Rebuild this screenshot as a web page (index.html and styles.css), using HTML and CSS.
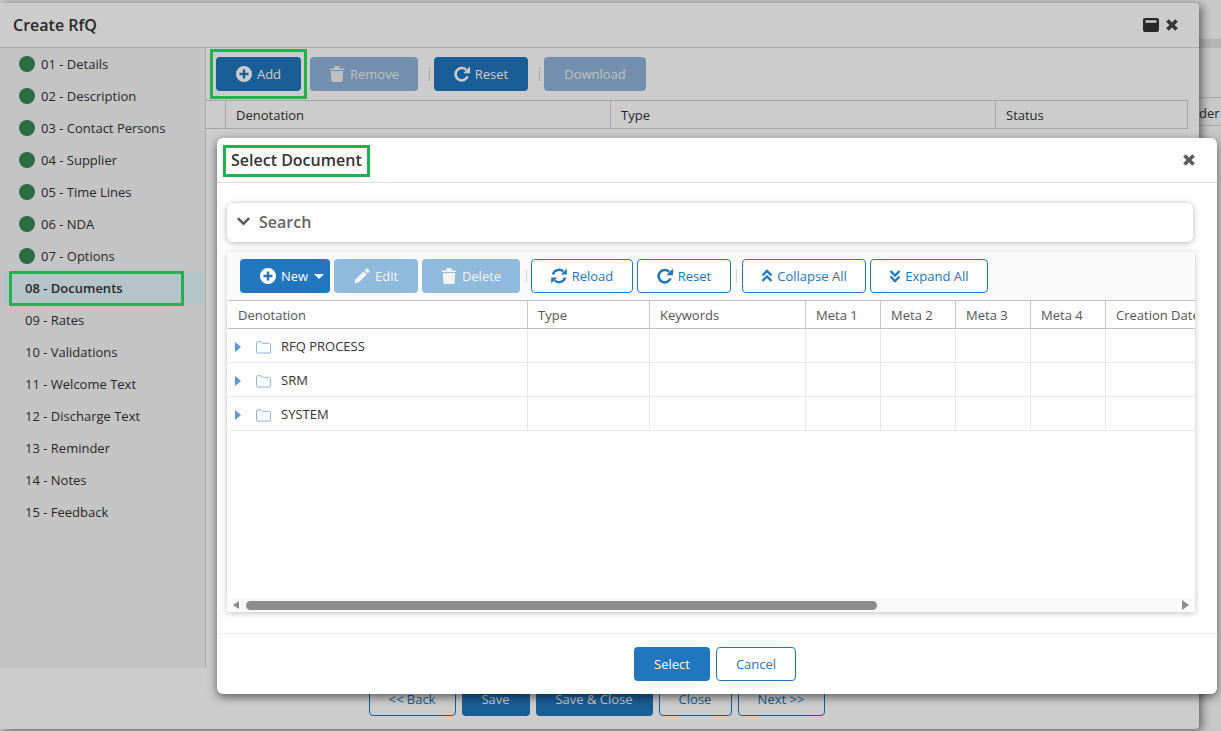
FILE: index.html
```html
<!DOCTYPE html>
<html lang="en">
<head>
  <meta charset="UTF-8">
  <meta name="viewport" content="width=device-width, initial-scale=1.0">
  <title>Create RfQ</title>
  <link rel="stylesheet" href="styles.css">
</head>
<body>
  <svg class="sprite" xmlns="http://www.w3.org/2000/svg">
    <symbol id="i-plus" viewBox="0 0 16 16"><path fill-rule="evenodd" d="M8 0a8 8 0 1 0 0 16A8 8 0 0 0 8 0zM6.8 3.5h2.4v3.3h3.3v2.4H9.2v3.3H6.8V9.2H3.5V6.8h3.3z"/></symbol>
    <symbol id="i-trash" viewBox="0 0 16 16"><path d="M5.300 2.400V1.300C5.300.6 5.900 0 6.600 0h2.800c.7 0 1.300.6 1.300 1.300v1.100H14.500c.4 0 .7.3.7.7v1H.8v-1c0-.4.3-.7.7-.7zM1.800 5h12.400l-.6 9.600c0 .8-.6 1.400-1.300 1.400H3.700c-.7 0-1.300-.6-1.300-1.400z"/></symbol>
    <symbol id="i-repeat" viewBox="0 0 16 16"><path fill="none" stroke="currentColor" stroke-width="2.600" d="M13.600 10.400A6.200 6.200 0 1 1 12.200 3.800"/><path d="M16 .5v6.700H9.300z"/></symbol>
    <symbol id="i-refresh" viewBox="0 0 16 16"><path fill="none" stroke="currentColor" stroke-width="2.400" d="M2 6.600A6.200 6.200 0 0 1 12.300 3.500M14 9.400A6.200 6.200 0 0 1 3.700 12.500"/><path d="M15.800 .5v6H9.800zM.2 15.500v-6h6z"/></symbol>
    <symbol id="i-pencil" viewBox="0 0 16 16"><path d="M12 .8c.4-.4 1-.4 1.400 0l1.800 1.800c.4.4.4 1 0 1.400L13.800 5.400 10.600 2.200zM9.600 3.200l3.200 3.200L4.600 14.600.5 15.500l.9-4.100z"/></symbol>
    <symbol id="i-chevron" viewBox="0 0 16 16"><path fill="none" stroke="currentColor" stroke-width="2.600" d="M2 4.500l6 6 6-6"/></symbol>
    <symbol id="i-dbl-up" viewBox="0 0 12 14"><path fill="none" stroke="currentColor" stroke-width="2.300" d="M1.500 6.500L6 2l4.500 4.500M1.500 12L6 7.500l4.500 4.500"/></symbol>
    <symbol id="i-dbl-down" viewBox="0 0 12 14"><path fill="none" stroke="currentColor" stroke-width="2.300" d="M1.500 2L6 6.500 10.500 2M1.500 7.500L6 12l4.500-4.500"/></symbol>
    <symbol id="i-folder" viewBox="0 0 16 14"><path fill="none" stroke="currentColor" d="M.5 2a1.200 1.200 0 0 1 1.200-1.200h3.400l1.500 1.700h7.700a1.200 1.200 0 0 1 1.200 1.200v8.100a1.200 1.200 0 0 1-1.200 1.200H1.700a1.200 1.200 0 0 1-1.200-1.200z"/></symbol>
    <symbol id="i-times" viewBox="0 0 12 12"><path d="M1 3.200L3.200 1 6 3.800 8.800 1 11 3.200 8.200 6 11 8.800 8.800 11 6 8.200 3.200 11 1 8.800 3.800 6z"/></symbol>
    <symbol id="i-window" viewBox="0 0 16 14"><path fill-rule="evenodd" d="M2 0h12a2 2 0 0 1 2 2v10a2 2 0 0 1-2 2H2a2 2 0 0 1-2-2V2a2 2 0 0 1 2-2zM2.500 2.200v2.600h11V2.200z"/></symbol>
  </svg>

  <div class="backdrop-page">
    <div class="backdrop-head"></div>
    <div class="backdrop-col">der</div>
  </div>

  <div class="window">
    <div class="window-title">
      <span>Create RfQ</span>
      <div class="window-actions">
        <svg class="ico-window"><use href="#i-window"/></svg>
        <svg class="ico-times"><use href="#i-times"/></svg>
      </div>
    </div>
    <div class="window-body">
      <ul class="steps">
        <li class="done">01 - Details</li>
        <li class="done">02 - Description</li>
        <li class="done">03 - Contact Persons</li>
        <li class="done">04 - Supplier</li>
        <li class="done">05 - Time Lines</li>
        <li class="done">06 - NDA</li>
        <li class="done">07 - Options</li>
        <li class="active">08 - Documents</li>
        <li>09 - Rates</li>
        <li>10 - Validations</li>
        <li>11 - Welcome Text</li>
        <li>12 - Discharge Text</li>
        <li>13 - Reminder</li>
        <li>14 - Notes</li>
        <li>15 - Feedback</li>
      </ul>
      <div class="window-main">
        <div class="toolbar main-toolbar">
          <button class="btn primary w-add"><svg class="ico"><use href="#i-plus"/></svg>Add</button>
          <button class="btn primary off w-remove"><svg class="ico"><use href="#i-trash"/></svg>Remove</button>
          <span class="sep"></span>
          <button class="btn primary w-reset"><svg class="ico"><use href="#i-repeat"/></svg>Reset</button>
          <span class="sep"></span>
          <button class="btn primary off w-download">Download</button>
        </div>
        <div class="main-head">
          <div class="mh-blank"></div>
          <div class="mh-denotation">Denotation</div>
          <div class="mh-type">Type</div>
          <div class="mh-status">Status</div>
        </div>
      </div>
    </div>
    <div class="window-foot">
      <button class="btn outline w-back">&lt;&lt; Back</button>
      <button class="btn primary w-save">Save</button>
      <button class="btn primary w-saveclose">Save &amp; Close</button>
      <button class="btn outline w-close">Close</button>
      <button class="btn outline w-next">Next &gt;&gt;</button>
    </div>
  </div>

  <div class="overlay"></div>

  <div class="mark mark-add"></div>
  <div class="mark mark-step"></div>

  <div class="dialog">
    <div class="dialog-head">
      <h2>Select Document</h2>
      <svg class="ico-close"><use href="#i-times"/></svg>
    </div>
    <div class="dialog-body">
      <div class="search-panel">
        <svg class="ico-chevron"><use href="#i-chevron"/></svg>
        <span>Search</span>
      </div>
      <div class="grid-panel">
        <div class="toolbar grid-toolbar">
          <button class="btn primary w-new"><svg class="ico"><use href="#i-plus"/></svg>New<i class="caret"></i></button>
          <button class="btn primary faded w-edit"><svg class="ico"><use href="#i-pencil"/></svg>Edit</button>
          <button class="btn primary faded w-delete"><svg class="ico"><use href="#i-trash"/></svg>Delete</button>
          <span class="sep"></span>
          <button class="btn outline w-reload"><svg class="ico"><use href="#i-refresh"/></svg>Reload</button>
          <button class="btn outline w-reset2"><svg class="ico"><use href="#i-repeat"/></svg>Reset</button>
          <span class="sep"></span>
          <button class="btn outline w-collapse"><svg class="ico-dbl"><use href="#i-dbl-up"/></svg>Collapse All</button>
          <button class="btn outline w-expand"><svg class="ico-dbl"><use href="#i-dbl-down"/></svg>Expand All</button>
        </div>
        <div class="grid-scroll">
          <table class="grid">
            <thead>
              <tr>
                <th class="c-den">Denotation</th>
                <th class="c-type">Type</th>
                <th class="c-key">Keywords</th>
                <th class="c-m">Meta 1</th>
                <th class="c-m">Meta 2</th>
                <th class="c-m">Meta 3</th>
                <th class="c-m">Meta 4</th>
                <th class="c-date">Creation Date</th>
              </tr>
            </thead>
            <tbody>
              <tr>
                <td><i class="tree-arrow"></i><svg class="ico-folder"><use href="#i-folder"/></svg>RFQ PROCESS</td>
                <td></td><td></td><td></td><td></td><td></td><td></td><td></td>
              </tr>
              <tr>
                <td><i class="tree-arrow"></i><svg class="ico-folder"><use href="#i-folder"/></svg>SRM</td>
                <td></td><td></td><td></td><td></td><td></td><td></td><td></td>
              </tr>
              <tr>
                <td><i class="tree-arrow"></i><svg class="ico-folder"><use href="#i-folder"/></svg>SYSTEM</td>
                <td></td><td></td><td></td><td></td><td></td><td></td><td></td>
              </tr>
            </tbody>
          </table>
        </div>
        <div class="hscroll">
          <i class="arrow-left"></i>
          <div class="hscroll-track"><div class="hscroll-thumb"></div></div>
          <i class="arrow-right"></i>
        </div>
      </div>
    </div>
    <div class="dialog-foot">
      <button class="btn primary w-select">Select</button>
      <button class="btn outline w-cancel">Cancel</button>
    </div>
    <div class="mark mark-title"></div>
  </div>
</body>
</html>
```
FILE: styles.css
```css
* {
  box-sizing: border-box;
}
html, body {
  margin: 0;
  height: 731px;
  overflow: hidden;
}
body {
  position: relative;
  font-family: 'Open Sans', sans-serif;
  font-size: 13px;
  color: #333;
  background-color: #fafafa;
}
.sprite {
  display: none;
}
svg {
  fill: currentColor;
  flex: none;
}

/* page behind the window */
.backdrop-page {
  position: absolute;
  left: 1199px;
  top: 0;
  width: 22px;
  height: 731px;
  overflow: hidden;
}
.backdrop-head {
  height: 9px;
  margin-top: 39px;
  background-color: #e2e2e2;
}
.backdrop-col {
  margin-top: 49px;
  height: 29px;
  line-height: 30px;
  border-top: 1px solid #d5d5d5;
  border-bottom: 1px solid #d5d5d5;
  color: #333;
}

/* create rfq window */
.window {
  position: absolute;
  left: 0;
  top: 3px;
  width: 1199px;
  height: 726px;
  display: flex;
  flex-direction: column;
  background-color: #fff;
  border-radius: 0 4px 4px 0;
  box-shadow: 3px 2px 9px rgba(0,0,0,0.5);
}
.window-title {
  height: 45px;
  flex: none;
  display: flex;
  align-items: center;
  justify-content: space-between;
  padding: 0 20px 0 13px;
  font-size: 16px;
  font-weight: 600;
  border-bottom: 1px solid #d8d8d8;
}
.window-actions {
  display: flex;
  align-items: center;
  gap: 6px;
}
.ico-window {
  width: 16px;
  height: 14px;
  color: #333;
}
.ico-times {
  width: 14px;
  height: 14px;
  color: #444;
}
.window-body {
  flex: 1;
  display: flex;
  min-height: 0;
}
.steps {
  width: 206px;
  flex: none;
  margin: 0;
  padding: 0 0 0 4px;
  list-style: none;
  background-color: #f5f5f5;
  border-right: 1px solid #d8d8d8;
}
.steps li {
  height: 32px;
  line-height: 32px;
  padding-left: 21px;
  position: relative;
}
.steps li.done {
  padding-left: 37px;
}
.steps li.done::before {
  content: '';
  position: absolute;
  left: 15px;
  top: 8px;
  width: 16px;
  height: 16px;
  border-radius: 50%;
  background-color: #368a55;
}
.steps li.active {
  background-color: #e1f5fa;
  font-weight: 600;
}
.window-main {
  flex: 1;
  min-width: 0;
}
.toolbar {
  display: flex;
  align-items: center;
}
.main-toolbar {
  height: 52px;
  padding-left: 10px;
}
.main-toolbar .w-add {
  margin-right: 9px;
}
.main-toolbar .sep {
  margin: 0 4px 0 11px;
}
.main-head {
  display: flex;
  height: 29px;
  line-height: 28px;
  width: 982px;
  border-top: 1px solid #d0d0d0;
  border-bottom: 1px solid #d0d0d0;
  border-right: 1px solid #d0d0d0;
}
.main-head div {
  border-right: 1px solid #d0d0d0;
  padding-left: 10px;
}
.mh-blank {
  width: 20px;
}
.mh-denotation, .mh-type {
  width: 385px;
}
.mh-status {
  flex: 1;
  border-right: none !important;
}
.window-foot {
  height: 61px;
  flex: none;
  display: flex;
  justify-content: center;
  gap: 6px;
  padding-top: 14px;
  padding-right: 6px;
}

/* buttons */
.btn {
  height: 34px;
  padding: 0;
  display: inline-flex;
  align-items: center;
  justify-content: center;
  font-family: inherit;
  font-size: 13px;
  border-radius: 4px;
  border: 1px solid transparent;
  cursor: pointer;
}
.btn.primary {
  background-color: #2176bd;
  color: #fff;
}
.btn.outline {
  background-color: #fff;
  border-color: #2176bd;
  color: #2176bd;
}
.btn.off {
  background-color: #8fb5d9;
  color: #f0f0f0;
}
.btn.faded {
  background-color: #90b9de;
  color: #f4f4f4;
}
.ico {
  width: 16px;
  height: 16px;
  margin-right: 5px;
}
.ico-dbl {
  width: 12px;
  height: 14px;
  margin-right: 4px;
}
.caret {
  margin-left: 6px;
  border-left: 5px solid transparent;
  border-right: 5px solid transparent;
  border-top: 5px solid #fff;
}
.sep {
  width: 1px;
  height: 14px;
  background-color: #d6d6d6;
  flex: none;
}
.w-add { width: 85px; }
.w-remove { width: 108px; }
.w-reset { width: 94px; }
.w-download { width: 102px; }
.w-back { width: 87px; }
.w-save { width: 68px; }
.w-saveclose { width: 117px; }
.w-close { width: 73px; }
.w-next { width: 87px; }
.w-new { width: 90px; justify-content: flex-start; padding-left: 19px; }
.w-edit { width: 84px; }
.w-delete { width: 98px; }
.w-reload { width: 102px; }
.w-reset2 { width: 94px; }
.w-collapse { width: 124px; }
.w-expand { width: 118px; }
.w-select { width: 76px; }
.w-cancel { width: 80px; }

.overlay {
  position: absolute;
  inset: 0;
  background-color: rgba(0,0,0,0.2);
}

/* green annotation frames */
.mark {
  position: absolute;
  border: 3px solid #22b14c;
}
.mark-add {
  left: 210px;
  top: 49px;
  width: 97px;
  height: 50px;
}
.mark-step {
  left: 9px;
  top: 271px;
  width: 175px;
  height: 35px;
}
.mark-title {
  left: 6px;
  top: 7px;
  width: 147px;
  height: 32px;
}

/* select document dialog */
.dialog {
  position: absolute;
  left: 217px;
  top: 138px;
  width: 1000px;
  height: 556px;
  display: flex;
  flex-direction: column;
  background-color: #fff;
  border-radius: 6px;
  box-shadow: 0 3px 10px rgba(0,0,0,0.55);
}
.dialog-head {
  height: 45px;
  flex: none;
  display: flex;
  align-items: center;
  justify-content: space-between;
  padding: 0 21px 0 14px;
  border-bottom: 1px solid #e0e0e0;
}
.dialog-head h2 {
  margin: 0;
  font-size: 16px;
  font-weight: 600;
}
.ico-close {
  width: 14px;
  height: 14px;
  color: #5c5c5c;
}
.dialog-body {
  flex: 1;
  padding: 20px 22px 0 10px;
  min-height: 0;
}
.search-panel {
  height: 39px;
  display: flex;
  align-items: center;
  gap: 8px;
  padding-left: 9px;
  padding-bottom: 2px;
  width: 966px;
  font-size: 16px;
  font-weight: 600;
  color: #666;
  border-radius: 6px;
  box-shadow: 0 1px 6px rgba(0,0,0,0.3);
}
.ico-chevron {
  width: 15px;
  height: 15px;
  color: #555;
}
.grid-panel {
  margin-top: 10px;
  width: 968px;
  height: 360px;
  display: flex;
  flex-direction: column;
  padding-left: 1px;
  background-color: #fff;
  box-shadow: 0 1px 6px rgba(0,0,0,0.25);
  overflow: hidden;
}
.grid-toolbar {
  height: 48px;
  flex: none;
  gap: 4px;
  padding-left: 12px;
  background-color: #fafafa;
}
.grid-toolbar .sep {
  margin: 0 0 0 2px;
}
.grid-toolbar .w-reset2 + .sep {
  margin: 0 1px 0 1px;
}
.grid-scroll {
  flex: 1;
  overflow: hidden;
  min-height: 0;
}
.grid {
  border-collapse: separate;
  border-spacing: 0;
  table-layout: fixed;
  width: 1101px;
}
.grid th {
  height: 29px;
  padding: 0 10px;
  text-align: left;
  font-weight: 400;
  color: #555;
  white-space: nowrap;
  overflow: hidden;
  border-top: 1px solid #c0c0c0;
  border-bottom: 1px solid #c0c0c0;
  border-right: 1px solid #c8c8c8;
}
.grid td {
  height: 34px;
  padding: 0 0 0 7px;
  border-bottom: 1px solid #e8e8e8;
  border-right: 1px solid #e8e8e8;
  white-space: nowrap;
}
.c-den { width: 300px; }
.c-type { width: 122px; }
.c-key { width: 156px; }
.c-m { width: 75px; }
.c-date { width: 223px; }
.tree-arrow {
  display: inline-block;
  vertical-align: middle;
  border-left: 6px solid #5d9bd0;
  border-top: 5px solid transparent;
  border-bottom: 5px solid transparent;
  margin-right: 15px;
}
.ico-folder {
  width: 15px;
  height: 13px;
  vertical-align: middle;
  color: #7fb0d8;
  margin-right: 10px;
}
.hscroll {
  height: 14px;
  flex: none;
  display: flex;
  align-items: center;
  padding: 0 6px 0 5px;
  background-color: #fafafa;
}
.hscroll-track {
  flex: 1;
  padding: 0 7px;
}
.hscroll-thumb {
  width: 631px;
  height: 9px;
  border-radius: 5px;
  background-color: #8c8c8c;
}
.arrow-left {
  border-right: 6px solid #8c8c8c;
  border-top: 4px solid transparent;
  border-bottom: 4px solid transparent;
}
.arrow-right {
  border-left: 7px solid #8c8c8c;
  border-top: 5px solid transparent;
  border-bottom: 5px solid transparent;
}
.dialog-foot {
  height: 61px;
  flex: none;
  display: flex;
  justify-content: center;
  gap: 6px;
  padding-top: 13px;
  padding-right: 4px;
  border-top: 1px solid #f2f2f2;
}
```
